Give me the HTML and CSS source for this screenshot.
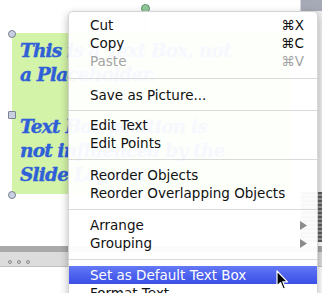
FILE: index.html
```html
<!DOCTYPE html>
<html lang="en">
<head>
    <meta charset="UTF-8">
    <title>Text Box Context Menu</title>
    <link rel="stylesheet" href="styles.css">
</head>
<body>
    <div class="window">
        <div class="workspace">
            <div class="canvas">
                <div class="textbox">
                    <span class="handle round top-left"></span>
                    <span class="handle square mid-left"></span>
                    <span class="handle round bottom-left"></span>
                    <span class="rotate-line"></span>
                    <span class="rotate-handle"></span>
                    <p>This is a Text Box, not<br>a Placeholder.</p>
                    <p>Text Box position is<br>not influenced by the<br>Slide Layout.</p>
                </div>
            </div>
            <div class="scrollbar">
                <div class="scroll-cap"></div>
                <div class="scroll-track"></div>
                <div class="scroll-grip"></div>
            </div>
        </div>
        <div class="statusbar">
            <div class="toolbar-edge"></div>
            <div class="dots"><span></span><span></span><span></span></div>
        </div>

        <ul class="menu">
            <li class="item">Cut <span class="key">⌘X</span></li>
            <li class="item">Copy <span class="key">⌘C</span></li>
            <li class="item disabled">Paste <span class="key">⌘V</span></li>
            <li class="sep first"></li>
            <li class="item">Save as Picture...</li>
            <li class="sep second"></li>
            <li class="item">Edit Text</li>
            <li class="item">Edit Points</li>
            <li class="sep"></li>
            <li class="item">Reorder Objects</li>
            <li class="item">Reorder Overlapping Objects</li>
            <li class="sep"></li>
            <li class="item">Arrange <svg class="arrow" width="7" height="9" viewBox="0 0 7 9"><path d="M0 0 L7 4.5 L0 9 Z" fill="#8c8c8c"/></svg></li>
            <li class="item">Grouping <svg class="arrow" width="7" height="9" viewBox="0 0 7 9"><path d="M0 0 L7 4.5 L0 9 Z" fill="#8c8c8c"/></svg></li>
            <li class="sep"></li>
            <li class="item active">Set as Default Text Box</li>
            <li class="item">Format Text</li>
        </ul>

        <svg class="cursor" width="13" height="21" viewBox="0 0 13 21">
            <path d="M1 1 L1 16 L4.5 12.6 L7.2 19 L9.4 18 L6.8 11.8 L11.5 11.8 Z" fill="#000" stroke="#fff" stroke-width="1.2" stroke-linejoin="round"/>
        </svg>
    </div>
</body>
</html>
```

FILE: styles.css
```css
* {
    box-sizing: border-box;
}

body {
    margin: 0;
    background-color: #ffffff;
    font-family: "DejaVu Sans", Verdana, sans-serif;
}

.window {
    position: relative;
    width: 322px;
    height: 293px;
    overflow: hidden;
    background-color: #ffffff;
}

.workspace {
    display: flex;
    height: 246px;
}

.canvas {
    flex: 1;
    padding: 33px 0 0 12px;
}

.textbox {
    position: relative;
    width: 278px;
    height: 161px;
    padding: 6px 0 0 8px;
    background-color: #d3f3a8;
    color: #2f60d8;
    font-family: "DejaVu Serif", "Liberation Serif", serif;
    font-weight: bold;
    font-style: italic;
    font-size: 18.5px;
    line-height: 24px;
    letter-spacing: -0.8px;
    white-space: nowrap;
    -webkit-text-stroke: 0.4px #2f60d8;
}

.textbox p {
    margin: 0 0 28px 0;
}

.handle {
    position: absolute;
    left: -4px;
    width: 8px;
    height: 8px;
    background-color: #c9d0e2;
    border: 1px solid #7d8294;
}

.handle.round {
    border-radius: 50%;
}

.handle.square {
    border-radius: 1px;
}

.top-left {
    top: -3px;
}

.mid-left {
    top: 78px;
}

.bottom-left {
    top: 158px;
}

.rotate-line {
    position: absolute;
    left: 133px;
    top: -22px;
    width: 1px;
    height: 22px;
    background-color: #9ab59e;
}

.rotate-handle {
    position: absolute;
    left: 129px;
    top: -29px;
    width: 9px;
    height: 9px;
    border-radius: 50%;
    background-color: #93c99c;
    border: 1px solid #5f8f67;
}

.scrollbar {
    width: 22px;
    display: flex;
    flex-direction: column;
    border-left: 1px solid #d5d7dc;
}

.scroll-cap {
    height: 11px;
    background-color: #a6aab6;
}

.scroll-track {
    flex: 1;
    background-color: #ededed;
}

.scroll-grip {
    height: 50px;
    margin-bottom: 4px;
    background: repeating-linear-gradient(180deg, #5d5d5d 0, #5d5d5d 2px, #9a9a9a 2px, #9a9a9a 4px);
}

.statusbar {
    height: 21px;
    background-color: #dcdcdc;
    border-bottom: 1px solid #c2c2c2;
}

.toolbar-edge {
    height: 6px;
    background-color: #a9a9a9;
}

.dots {
    display: flex;
    gap: 5px;
    padding: 8px 0 0 8px;
}

.dots span {
    width: 4px;
    height: 4px;
    border-radius: 50%;
    border: 1px solid #8e8e8e;
    background-color: #d0d0d0;
}

.menu {
    position: absolute;
    left: 68px;
    top: 11px;
    width: 250px;
    height: 300px;
    margin: 0;
    padding: 4px 0 0 0;
    list-style: none;
    background-color: rgba(255, 255, 255, 0.955);
    border: 1px solid rgba(0, 0, 0, 0.16);
    border-radius: 5px 5px 0 0;
    box-shadow: 0 3px 9px rgba(0, 0, 0, 0.28);
    font-size: 13.5px;
    color: #111111;
}

.item {
    display: flex;
    align-items: center;
    justify-content: space-between;
    height: 18px;
    padding: 0 13px 0 21px;
    white-space: nowrap;
}

.item.disabled {
    color: #a3a3a3;
}

.arrow {
    margin-right: -3px;
}

.item.active {
    background: linear-gradient(180deg, #6479f4 0%, #4b60ee 55%, #3a50e6 100%);
    color: #ffffff;
}

.sep {
    height: 14px;
    display: flex;
    align-items: center;
}

.sep::after {
    content: "";
    flex: 1;
    height: 1px;
    background-color: #dadada;
}

.sep.first {
    height: 16px;
}

.sep.second {
    height: 12px;
}

.cursor {
    position: absolute;
    left: 276px;
    top: 270px;
}
```
